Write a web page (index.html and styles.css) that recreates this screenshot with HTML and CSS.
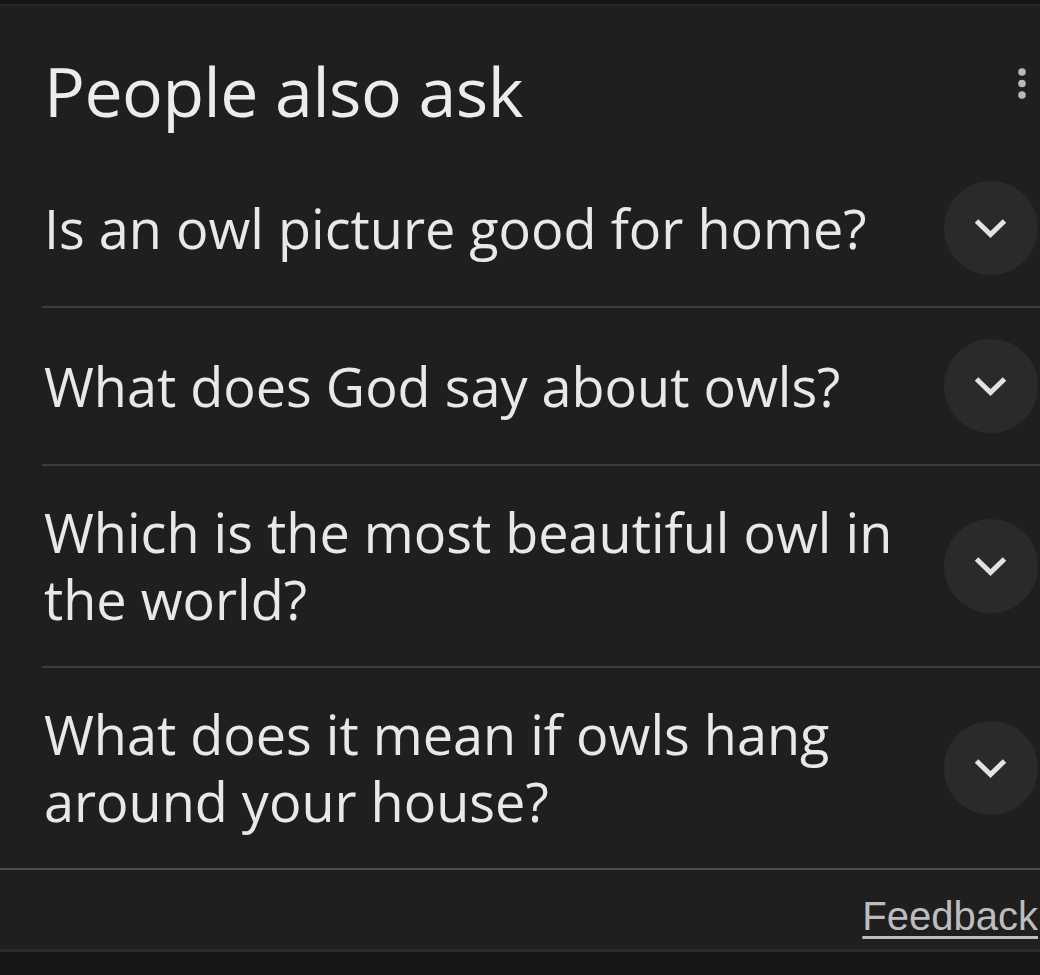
FILE: index.html
```html
<!DOCTYPE html>
<html lang="en">
<head>
<meta charset="utf-8">
<title>People also ask</title>
<link rel="stylesheet" href="styles.css">
</head>
<body>
<div class="topbar"></div>
<section class="paa">
  <header class="paa-head">
    <h2 class="paa-title">People also ask</h2>
    <svg class="more" width="10" height="34" viewBox="0 0 10 34" aria-hidden="true">
      <circle cx="5" cy="5" r="3.8"/>
      <circle cx="5" cy="16.5" r="3.8"/>
      <circle cx="5" cy="28" r="3.8"/>
    </svg>
  </header>
  <div class="paa-list">
    <div class="paa-row">
      <div class="paa-q">Is an owl picture good for home?</div>
      <span class="chev"><svg width="94" height="94" viewBox="0 0 94 94"><path d="M32.5 40 L46.5 53.5 L60.5 40"/></svg></span>
    </div>
    <div class="paa-row">
      <div class="paa-q">What does God say about owls?</div>
      <span class="chev"><svg width="94" height="94" viewBox="0 0 94 94"><path d="M32.5 40 L46.5 53.5 L60.5 40"/></svg></span>
    </div>
    <div class="paa-row">
      <div class="paa-q">Which is the most beautiful owl in the world?</div>
      <span class="chev"><svg width="94" height="94" viewBox="0 0 94 94"><path d="M32.5 40 L46.5 53.5 L60.5 40"/></svg></span>
    </div>
    <div class="paa-row last">
      <div class="paa-q">What does it mean if owls hang around your house?</div>
      <span class="chev"><svg width="94" height="94" viewBox="0 0 94 94"><path d="M32.5 40 L46.5 53.5 L60.5 40"/></svg></span>
    </div>
  </div>
  <div class="paa-foot">
    <a class="feedback" href="#">Feedback</a>
  </div>
</section>
<div class="bottombar"></div>
</body>
</html>
```
FILE: styles.css
```css
html, body {
  margin: 0;
  padding: 0;
  background: #1f1f1f;
  height: 100%;
  overflow: hidden;
}
body {
  font-family: "Open Sans", "Noto Sans", sans-serif;
  color: #e8e8e8;
}
.topbar {
  height: 4px;
  background: #151515;
  border-bottom: 2px solid #262626;
}
.paa {
  background: #1f1f1f;
}
.paa-head {
  display: flex;
  justify-content: space-between;
  align-items: flex-start;
  height: 144px;
  padding-left: 44px;
  padding-right: 13px;
  box-sizing: border-box;
}
.paa-title {
  margin: 0;
  padding-top: 45px;
  font-size: 68px;
  font-weight: 500;
  line-height: 80px;
  color: #ececec;
  letter-spacing: -0.5px;
}
.more {
  margin-top: 61px;
  fill: #b8b8b8;
}
.paa-list {
  padding-left: 42px;
}
.paa-row {
  display: flex;
  align-items: center;
  justify-content: space-between;
  padding: 31px 2px 31px 2px;
  border-bottom: 2px solid #3d3d3d;
}
.paa-row.last {
  border-bottom: none;
}
.paa-q {
  font-size: 54px;
  line-height: 67px;
  padding: 2px 0;
  font-weight: 500;
  max-width: 880px;
  color: #e8e8e8;
}
.chev {
  flex: none;
  width: 94px;
  height: 94px;
  border-radius: 50%;
  background: #2a2a2a;
  display: flex;
}
.chev path {
  fill: none;
  stroke: #e2e2e2;
  stroke-width: 5;
  stroke-linecap: butt;
  stroke-linejoin: miter;
}
.paa-foot {
  border-top: 2px solid #4a4a4a;
  height: 79px;
  display: flex;
  justify-content: flex-end;
  align-items: flex-start;
  padding-right: 2px;
  border-bottom: 3px solid #2b2b2b;
}
.feedback {
  font-family: "Liberation Sans", Arial, sans-serif;
  font-size: 40px;
  line-height: 44px;
  margin-top: 24px;
  color: #bdbdbd;
  text-decoration: underline;
  text-decoration-thickness: 3px;
  text-underline-offset: 6px;
}
.bottombar {
  height: 30px;
  background: #171717;
}
```
